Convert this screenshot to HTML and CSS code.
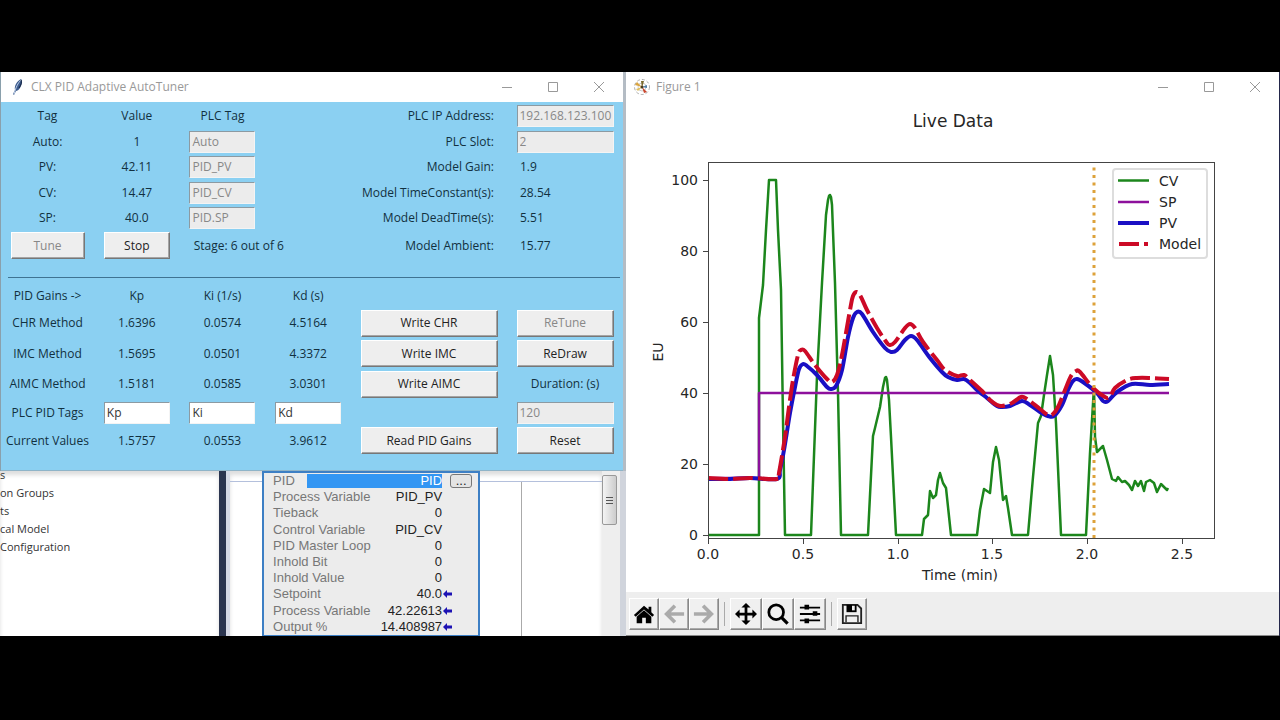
FILE: index.html
```html
<!DOCTYPE html>
<html lang="en">
<head>
  <meta charset="UTF-8" />
  <meta name="viewport" content="width=device-width, initial-scale=1.0"/>
  <title>CLX PID Adaptive AutoTuner</title>
  <link rel="stylesheet" href="styles.css">
</head>
<body>
  <main class="desktop">
    <div class="left">

      <!-- Tuner window -->
      <section class="window tuner">
        <header class="titlebar">
          <svg class="app-icon" viewBox="0 0 16 16" aria-hidden="true">
            <path d="M12 0c2 2 1 6-1 9-1 2-3 3-4 3l-2 4-1-1 2-4c-1-4 2-9 6-11z" fill="#3b5a8c"/>
            <path d="M12 1C9 4 7 8 5 15" fill="none" stroke="#c3d3ea" stroke-width="1"/>
            <path d="M12 1c1 2 0 5-2 8" fill="none" stroke="#16233d" stroke-width="1"/>
          </svg>
          <h1>CLX PID Adaptive AutoTuner</h1>
          <div class="controls">
            <button aria-label="Minimize"><svg viewBox="0 0 12 12"><path d="M1 6.5h10"/></svg></button>
            <button aria-label="Maximize"><svg viewBox="0 0 12 12"><path d="M1.5 1.5h9v9h-9z"/></svg></button>
            <button aria-label="Close"><svg viewBox="0 0 12 12"><path d="M1 1l10 10M11 1L1 11"/></svg></button>
          </div>
        </header>

        <div class="client">
          <div class="panel">
            <table class="tags">
              <colgroup><col class="c-name"><col><col><col></colgroup>
              <tr><th>Tag</th><th>Value</th><th>PLC Tag</th><td></td></tr>
              <tr><th><label for="tagAuto">Auto:</label></th><td>1</td><td><input type="text" id="tagAuto" value="Auto" disabled></td><td></td></tr>
              <tr><th><label for="tagPv">PV:</label></th><td>42.11</td><td><input type="text" id="tagPv" value="PID_PV" disabled></td><td></td></tr>
              <tr><th><label for="tagCv">CV:</label></th><td>14.47</td><td><input type="text" id="tagCv" value="PID_CV" disabled></td><td></td></tr>
              <tr><th><label for="tagSp">SP:</label></th><td>40.0</td><td><input type="text" id="tagSp" value="PID.SP" disabled></td><td></td></tr>
              <tr><td><button class="btn tune" disabled>Tune</button></td><td><button class="btn stop">Stop</button></td><td colspan="2" class="stage">Stage: 6 out of 6</td></tr>
            </table>

            <div class="model">
              <label for="plcIp">PLC IP Address:</label><input type="text" id="plcIp" value="192.168.123.100" disabled>
              <label for="plcSlot">PLC Slot:</label><input type="text" id="plcSlot" value="2" disabled>
              <span>Model Gain:</span><output>1.9</output>
              <span>Model TimeConstant(s):</span><output>28.54</output>
              <span>Model DeadTime(s):</span><output>5.51</output>
              <span>Model Ambient:</span><output>15.77</output>
            </div>
          </div>

          <hr>

          <div class="panel">
            <table class="gains">
              <colgroup><col class="c-name"><col><col><col></colgroup>
              <tr><th>PID Gains -&gt;</th><th>Kp</th><th>Ki (1/s)</th><th>Kd (s)</th></tr>
              <tr><th>CHR Method</th><td>1.6396</td><td>0.0574</td><td>4.5164</td></tr>
              <tr><th>IMC Method</th><td>1.5695</td><td>0.0501</td><td>4.3372</td></tr>
              <tr><th>AIMC Method</th><td>1.5181</td><td>0.0585</td><td>3.0301</td></tr>
              <tr>
                <th>PLC PID Tags</th>
                <td><input type="text" value="Kp" aria-label="Kp tag"></td>
                <td><input type="text" value="Ki" aria-label="Ki tag"></td>
                <td><input type="text" value="Kd" aria-label="Kd tag"></td>
              </tr>
              <tr><th>Current Values</th><td>1.5757</td><td>0.0553</td><td>3.9612</td></tr>
            </table>

            <div class="actions">
              <span></span><span></span>
              <button class="btn">Write CHR</button><button class="btn" disabled>ReTune</button>
              <button class="btn">Write IMC</button><button class="btn">ReDraw</button>
              <button class="btn">Write AIMC</button><label for="duration">Duration: (s)</label>
              <span></span><input type="text" id="duration" value="120" disabled>
              <button class="btn">Read PID Gains</button><button class="btn">Reset</button>
            </div>
          </div>
        </div>
      </section>

      <!-- PLC editor behind the tuner -->
      <section class="editor">
        <ul class="tree">
          <li>s</li>
          <li>on Groups</li>
          <li>ts</li>
          <li>cal Model</li>
          <li>Configuration</li>
        </ul>
        <div class="splitter"></div>
        <div class="ladder">
          <div class="rung"></div>
          <div class="block">
            <table>
              <tr><th>PID</th><td><span class="selected">PID</span></td><td><button class="more" aria-label="Configure">...</button></td></tr>
              <tr><th>Process Variable</th><td>PID_PV</td><td></td></tr>
              <tr><th>Tieback</th><td>0</td><td></td></tr>
              <tr><th>Control Variable</th><td>PID_CV</td><td></td></tr>
              <tr><th>PID Master Loop</th><td>0</td><td></td></tr>
              <tr><th>Inhold Bit</th><td>0</td><td></td></tr>
              <tr><th>Inhold Value</th><td>0</td><td></td></tr>
              <tr><th>Setpoint</th><td>40.0</td><td><svg class="arrow" viewBox="0 0 9 8"><path d="M0 4l4-4v2.5h5v3H4V8z"/></svg></td></tr>
              <tr><th>Process Variable</th><td>42.22613</td><td><svg class="arrow" viewBox="0 0 9 8"><path d="M0 4l4-4v2.5h5v3H4V8z"/></svg></td></tr>
              <tr><th>Output %</th><td>14.408987</td><td><svg class="arrow" viewBox="0 0 9 8"><path d="M0 4l4-4v2.5h5v3H4V8z"/></svg></td></tr>
            </table>
          </div>
          <div class="rail"></div>
        </div>
        <div class="scroll"><div class="thumb"><i></i><i></i><i></i></div></div>
      </section>
    </div>

    <!-- Figure window -->
    <section class="window figure">
      <header class="titlebar">
        <svg class="app-icon" viewBox="0 0 16 16" aria-hidden="true">
          <circle cx="8" cy="8" r="7.5" fill="#fff" stroke="#aaa" stroke-dasharray="3 2"/>
          <circle cx="8" cy="8" r="4" fill="none" stroke="#ccc"/>
          <path d="M8 8L1 6l2-3z" fill="#d9a441"/>
          <path d="M8 8l-6 2 2 2z" fill="#e0c060"/>
          <path d="M8 9L7 2h3z" fill="#7a6a2c"/>
          <path d="M8 8l5 5-3 1z" fill="#c8452d"/>
          <path d="M8 8l5-2v3z" fill="#4f7fa8"/>
          <circle cx="8" cy="8" r="1.5" fill="#4b3a1e"/>
        </svg>
        <h2>Figure 1</h2>
        <div class="controls">
          <button aria-label="Minimize"><svg viewBox="0 0 12 12"><path d="M1 6.5h10"/></svg></button>
          <button aria-label="Maximize"><svg viewBox="0 0 12 12"><path d="M1.5 1.5h9v9h-9z"/></svg></button>
          <button aria-label="Close"><svg viewBox="0 0 12 12"><path d="M1 1l10 10M11 1L1 11"/></svg></button>
        </div>
      </header>

      <svg class="chart" viewBox="626 102 653 490" role="img" aria-label="Live Data">
        <text class="title" x="953" y="127">Live Data</text>

        <polyline class="cv" points="708,535 759,535 759,318 763,285 766,230 769,180 776,180 778,230 781,290 783,420 785,535 811,535 817,376 822,283 826,215 828,200 829,196 830,195 831,197 832,205 835,283 838,393 841,535 868,535 873,436 875,428 880,407 883,387 885,378 886,377 887,380 889,400 891,437 896,535 922,535 924,519 928,515 930,491 933,498 936,495 938,480 940,473 943,483 946,488 951,535 977,535 980,510 984,489 990,493 993,462 996,447 999,460 1003,500 1006,496 1008,508 1012,535 1028,535 1033,477 1038,423 1041,416 1044,395 1047,375 1050,356 1053,375 1056,423 1061,535 1086,535 1090,453 1094,387 1095,437 1097,452 1103,446 1107,460 1112,479 1116,481 1118,477 1122,482 1125,481 1129,485 1132,490 1135,481 1138,486 1141,481 1144,491 1146,482 1150,480 1154,483 1157,492 1161,484 1164,487 1167,490 1168,488"/>
        <polyline class="sp" points="708,478 759,478 759,393 1169,393"/>
        <path class="pv" data-points="708,479 730,479 750,478 777,479 780,470 784,450 790,413 795,387 799,369 803,364 807,366 817,375 827,387 831,389 836,386 842,370 848,337 853,318 857,312 862,314 873,332 885,348 891,352 897,350 905,340 911,336 917,340 930,358 942,372 948,377 957,380 964,379 970,383 977,390 987,398 997,406 1002,407 1010,406 1022,401 1030,405 1040,412 1048,416 1054,416 1062,405 1068,390 1073,381 1077,379 1083,382 1097,393 1103,401 1108,401 1117,392 1132,384 1150,385 1169,384"/>
        <path class="model-line" data-points="708,478 730,479 750,478 777,479 779,473 785,437 789,407 793,380 798,355 801,350 805,351 815,365 827,379 832,382 837,375 842,355 850,310 853,296 857,292 861,297 867,310 877,328 887,343 890,345 895,342 905,328 910,324 915,328 923,342 937,360 945,370 957,376 964,375 970,380 982,391 990,400 997,405 1002,406 1012,403 1021,397 1027,399 1040,409 1048,415 1053,414 1058,407 1065,390 1071,376 1076,371 1080,372 1093,388 1105,397 1110,397 1115,388 1127,380 1137,378 1150,378 1169,379"/>
        <line class="now" x1="1094" y1="538" x2="1094" y2="164"/>

        <rect class="axes" x="708.5" y="162.5" width="506" height="376"/>
        <path class="ticks" d="M703 535.5h5M703 464.5h5M703 393.5h5M703 322.5h5M703 251.5h5M703 180.5h5M708.5 539v5M803.5 539v5M898.5 539v5M992.5 539v5M1087.5 539v5M1182.5 539v5"/>
        <g class="ylabels">
          <text x="698" y="540">0</text>
          <text x="698" y="469">20</text>
          <text x="698" y="398">40</text>
          <text x="698" y="327">60</text>
          <text x="698" y="256">80</text>
          <text x="698" y="185">100</text>
        </g>
        <g class="xlabels">
          <text x="708" y="559">0.0</text>
          <text x="803" y="559">0.5</text>
          <text x="898" y="559">1.0</text>
          <text x="992" y="559">1.5</text>
          <text x="1087" y="559">2.0</text>
          <text x="1182" y="559">2.5</text>
          <text x="960" y="580">Time (min)</text>
          <text transform="translate(663 352) rotate(-90)">EU</text>
        </g>

        <rect class="legend" x="1113" y="169" width="94" height="89" rx="3"/>
        <path class="cv" d="M1118 180.5h31"/>
        <path class="sp" d="M1118 202h31"/>
        <path class="pv" d="M1118 223h31"/>
        <path class="model-line" d="M1119 244h29"/>
        <text x="1159" y="186">CV</text>
        <text x="1159" y="207">SP</text>
        <text x="1159" y="228">PV</text>
        <text x="1159" y="249">Model</text>
      </svg>

      <div class="toolbar">
        <button aria-label="Home"><svg viewBox="0 0 24 24"><path d="M12 3L1 13l2 2 9-8 9 8 2-2-3-3V4h-3v3z"/><path d="M4 15l8-7 8 7v7h-6v-6h-4v6H4z"/></svg></button>
        <button aria-label="Back" disabled><svg viewBox="0 0 24 24"><path d="M23 12H5M13 3l-9 9 9 9" fill="none" stroke="#aaa" stroke-width="4"/></svg></button>
        <button aria-label="Forward" disabled><svg viewBox="0 0 24 24"><path d="M1 12h18M11 3l9 9-9 9" fill="none" stroke="#aaa" stroke-width="4"/></svg></button>
        <span class="sep"></span>
        <button class="wide" aria-label="Pan"><svg viewBox="0 0 24 24"><path d="M12 0l5 5h-3.500v5.500H19V7l5 5-5 5v-3.500h-5.500V19H17l-5 5-5-5h3.500v-5.500H5V17l-5-5 5-5v3.500h5.500V5H7z"/></svg></button>
        <button class="wide" aria-label="Zoom"><svg viewBox="0 0 24 24"><circle cx="10" cy="10" r="8" fill="none" stroke="#000" stroke-width="3"/><path d="M15.5 15.5l7 7" stroke="#000" stroke-width="3.5"/></svg></button>
        <button class="wide" aria-label="Subplots"><svg viewBox="0 0 24 24"><path d="M1 4h22v2H1zM1 11h22v2H1zM1 18h22v2H1z"/><path d="M6 2h5v5H6zM15 9h5v5h-5zM6 17h5v5H6z"/></svg></button>
        <span class="sep"></span>
        <button aria-label="Save"><svg viewBox="0 0 24 24"><path d="M2 2h16l4 4v16H2z" fill="none" stroke="#222" stroke-width="2"/><path d="M6 2h11v8H6z"/><path d="M12 3h3v5h-3z" fill="#eee"/><path d="M5.5 21v-7h13v7" fill="none" stroke="#222" stroke-width="1.5"/></svg></button>
      </div>
    </section>
  </main>

  <script>
    // Draw a smooth curve through the sampled points
    function smoothPath(points) {
      let d = `M${points[0]}`;
      for (let i = 0; i < points.length - 1; i++) {
        const p0 = points[i - 1] || points[i];
        const p1 = points[i];
        const p2 = points[i + 1];
        const p3 = points[i + 2] || p2;
        const c1 = [p1[0] + (p2[0] - p0[0]) / 6, p1[1] + (p2[1] - p0[1]) / 6];
        const c2 = [p2[0] - (p3[0] - p1[0]) / 6, p2[1] - (p3[1] - p1[1]) / 6];
        d += `C${c1} ${c2} ${p2}`;
      }
      return d;
    }

    document.querySelectorAll('[data-points]').forEach(path => {
      const points = path.dataset.points.split(' ').map(p => p.split(',').map(Number));
      path.setAttribute('d', smoothPath(points));
    });
  </script>
</body>
</html>
```
FILE: styles.css
```css
* {
  box-sizing: border-box;
}
body {
  margin: 0;
  padding: 72px 0;
  background: #000;
  color: #12303f;
  font-family: "Open Sans", "Noto Sans", sans-serif;
  font-size: 12px;
  line-height: 16px;
}
button, input {
  font: inherit;
  color: inherit;
}
table {
  border-collapse: collapse;
  table-layout: fixed;
}
th, td {
  padding: 0;
  font-weight: normal;
  text-align: center;
  white-space: nowrap;
}
.desktop {
  display: grid;
  grid-template-columns: minmax(0, 626fr) minmax(0, 654fr);
}
.left {
  display: flex;
  flex-direction: column;
  background: #fff;
}

/* Windows */
.titlebar {
  display: flex;
  align-items: center;
  height: 30px;
  padding: 0 1px 0 8px;
  background: #fff;
  color: #999;
}
.titlebar h1, .titlebar h2 {
  flex: 1;
  margin: 0;
  font-size: 12px;
  font-weight: normal;
}
.app-icon {
  width: 16px;
  height: 16px;
  margin-right: 6px;
}
.controls {
  display: flex;
}
.controls button {
  width: 46px;
  height: 30px;
  padding: 0;
  border: none;
  background: none;
}
.controls svg {
  display: block;
  width: 12px;
  height: 12px;
  margin: auto;
  fill: none;
  stroke: #999;
}

/* Tuner */
.tuner {
  border-left: 1px solid #8aa0ac;
  border-right: 3px solid #b4bcc4;
}
.client {
  padding: 1px 0 15px;
  background: #8bd0f2;
  border-bottom: 1px solid #8fb4c8;
}
.panel {
  display: grid;
  grid-template-columns: 350fr 272fr;
}
.panel table {
  width: 100%;
}
.c-name {
  width: 93px;
}
.tags tr {
  height: 25px;
}
.tags tr:nth-child(odd) {
  height: 26px;
}
.tags tr:last-child {
  height: 29px;
}
.tags .stage {
  padding-left: 14px;
  text-align: left;
}
input[type="text"] {
  display: block;
  width: 66px;
  height: 22px;
  margin: 0 auto;
  padding: 0 0 1px 2px;
  border: 1px solid;
  border-color: #8c9aa2 #f4f4f4 #f4f4f4 #8c9aa2;
  border-radius: 0;
  background: #fff;
  color: #333;
}
input[type="text"]:disabled {
  background: #ececec;
  color: #888;
}
.model {
  display: grid;
  grid-template-columns: 156fr 116fr;
  grid-template-rows: 26px 25px 26px 25px 26px 29px;
  align-items: center;
}
.model label, .model span {
  display: flex;
  justify-content: flex-end;
  padding-right: 13px;
  white-space: nowrap;
}
.model output {
  padding-left: 13px;
}
.model input[type="text"], .actions input[type="text"] {
  width: 97px;
}
hr {
  height: 1px;
  margin: 17px 3px 5px 7px;
  border: none;
  background: #3f7392;
}
.gains tr {
  height: 30px;
}
.gains tr:first-child {
  height: 25px;
}
.gains tr:nth-child(3) {
  height: 31px;
}
.gains tr:nth-child(5) {
  height: 27px;
}
.gains tr:last-child {
  height: 29px;
}
.actions {
  display: grid;
  grid-template-columns: 156fr 116fr;
  grid-template-rows: 25px 30px 31px 30px 27px 29px;
  align-items: center;
  justify-items: center;
}
.btn {
  width: 97px;
  height: 27px;
  padding: 0;
  border: 1px solid;
  border-color: #fff #777 #777 #fff;
  box-shadow: inset -1px -1px #a5a5a5;
  background: #eee;
  color: #222;
}
.btn:disabled {
  color: #888;
}
.actions .btn:nth-child(odd) {
  width: 137px;
}
.btn.tune {
  width: 74px;
}
.btn.stop {
  width: 66px;
}

/* PLC editor */
.editor {
  display: flex;
  flex: 1;
  color: #333;
}
.tree {
  width: 35%;
  margin: 0;
  padding: 0;
  list-style: none;
  font-size: 11px;
  line-height: 18px;
  box-shadow: inset 0 4px 4px #ddd;
}
.tree li:first-child {
  margin-bottom: 5px;
  line-height: 8px;
}
.splitter {
  width: 11px;
  border-left: 7px solid #2b3550;
  background: #d5d9e6;
}
.ladder {
  position: relative;
  display: flex;
  flex: 1;
  padding-left: 32px;
  box-shadow: inset 0 4px 4px #ddd;
}
.rung {
  position: absolute;
  top: 10px;
  left: 0;
  right: 0;
  height: 1px;
  background: #b4c0dc;
}
.block {
  position: relative;
  width: 218px;
  padding-left: 9px;
  border: 2px solid #3d7fc4;
  border-bottom-width: 1px;
  background: #ececec;
}
.block table {
  width: 100%;
  height: 162px;
  table-layout: auto;
  font: 13px/16px "Liberation Sans", Arial, sans-serif;
}
.block th {
  width: 34px;
  max-width: 34px;
  color: #777;
  text-align: left;
}
.block td {
  color: #222;
  text-align: right;
}
.block td:last-child {
  width: 36px;
  padding-left: 1px;
  text-align: left;
}
.block .selected {
  display: block;
  background: #3396f3;
  color: #fff;
  line-height: 14px;
}
.more {
  display: block;
  width: 22px;
  height: 14px;
  margin-left: 7px;
  padding: 0;
  border: 1px solid #777;
  border-radius: 3px;
  background: #e4e4e4;
  line-height: 8px;
}
.arrow {
  display: block;
  width: 9px;
  height: 8px;
  fill: #1c12b4;
}
.rail {
  width: 42px;
  margin-top: 10px;
  border-right: 1px solid #aaa;
}
.scroll {
  width: 24px;
  padding-top: 4px;
  background: #eee;
  border-right: 6px solid #d0d4dc;
}
.thumb {
  display: flex;
  flex-direction: column;
  align-items: center;
  justify-content: center;
  gap: 2px;
  width: 15px;
  height: 50px;
  border: 1px solid #999;
  border-radius: 2px;
  background: linear-gradient(90deg, #f4f4f4, #ccc);
}
.thumb i {
  width: 7px;
  height: 1px;
  background: #555;
}

/* Figure */
.figure {
  display: flex;
  flex-direction: column;
  border-right: 1px solid #23264a;
  background: #fff;
}
.chart {
  display: block;
  width: 100%;
  font-family: "DejaVu Sans", sans-serif;
  font-size: 14px;
  fill: #262626;
}
.chart .title {
  font-size: 17px;
  text-anchor: middle;
}
.ylabels {
  text-anchor: end;
}
.xlabels {
  text-anchor: middle;
}
.axes, .ticks {
  fill: none;
  stroke: #444;
}
.chart .legend {
  fill: #fff;
  stroke: #ddd;
  stroke-width: 2;
}
.cv, .sp, .pv, .model-line, .now {
  fill: none;
  stroke-width: 2.5;
  stroke-linejoin: round;
}
.cv {
  stroke: #1c861c;
}
.sp {
  stroke: #8d109c;
}
.pv {
  stroke: #1a0fc4;
  stroke-width: 4;
}
.model-line {
  stroke: #cc0a26;
  stroke-width: 4;
  stroke-dasharray: 20 5;
}
.now {
  stroke: #dda23a;
  stroke-width: 3;
  stroke-dasharray: 3 4.5;
}
.toolbar {
  display: flex;
  flex: 1;
  align-items: center;
  min-height: 44px;
  padding-left: 3px;
  background: #eee;
  border-bottom: 1px solid #888;
}
.toolbar button {
  display: grid;
  place-items: center;
  width: 30px;
  height: 32px;
  padding: 0;
  border: 1px solid;
  border-color: #fff #888 #888 #fff;
  box-shadow: inset -1px -1px #aaa;
  background: #f0f0f0;
}
.toolbar .wide {
  width: 32px;
}
.toolbar svg {
  width: 22px;
  height: 22px;
}
.sep {
  width: 1px;
  height: 24px;
  margin: 0 5px;
  background: #aaa;
}
```
